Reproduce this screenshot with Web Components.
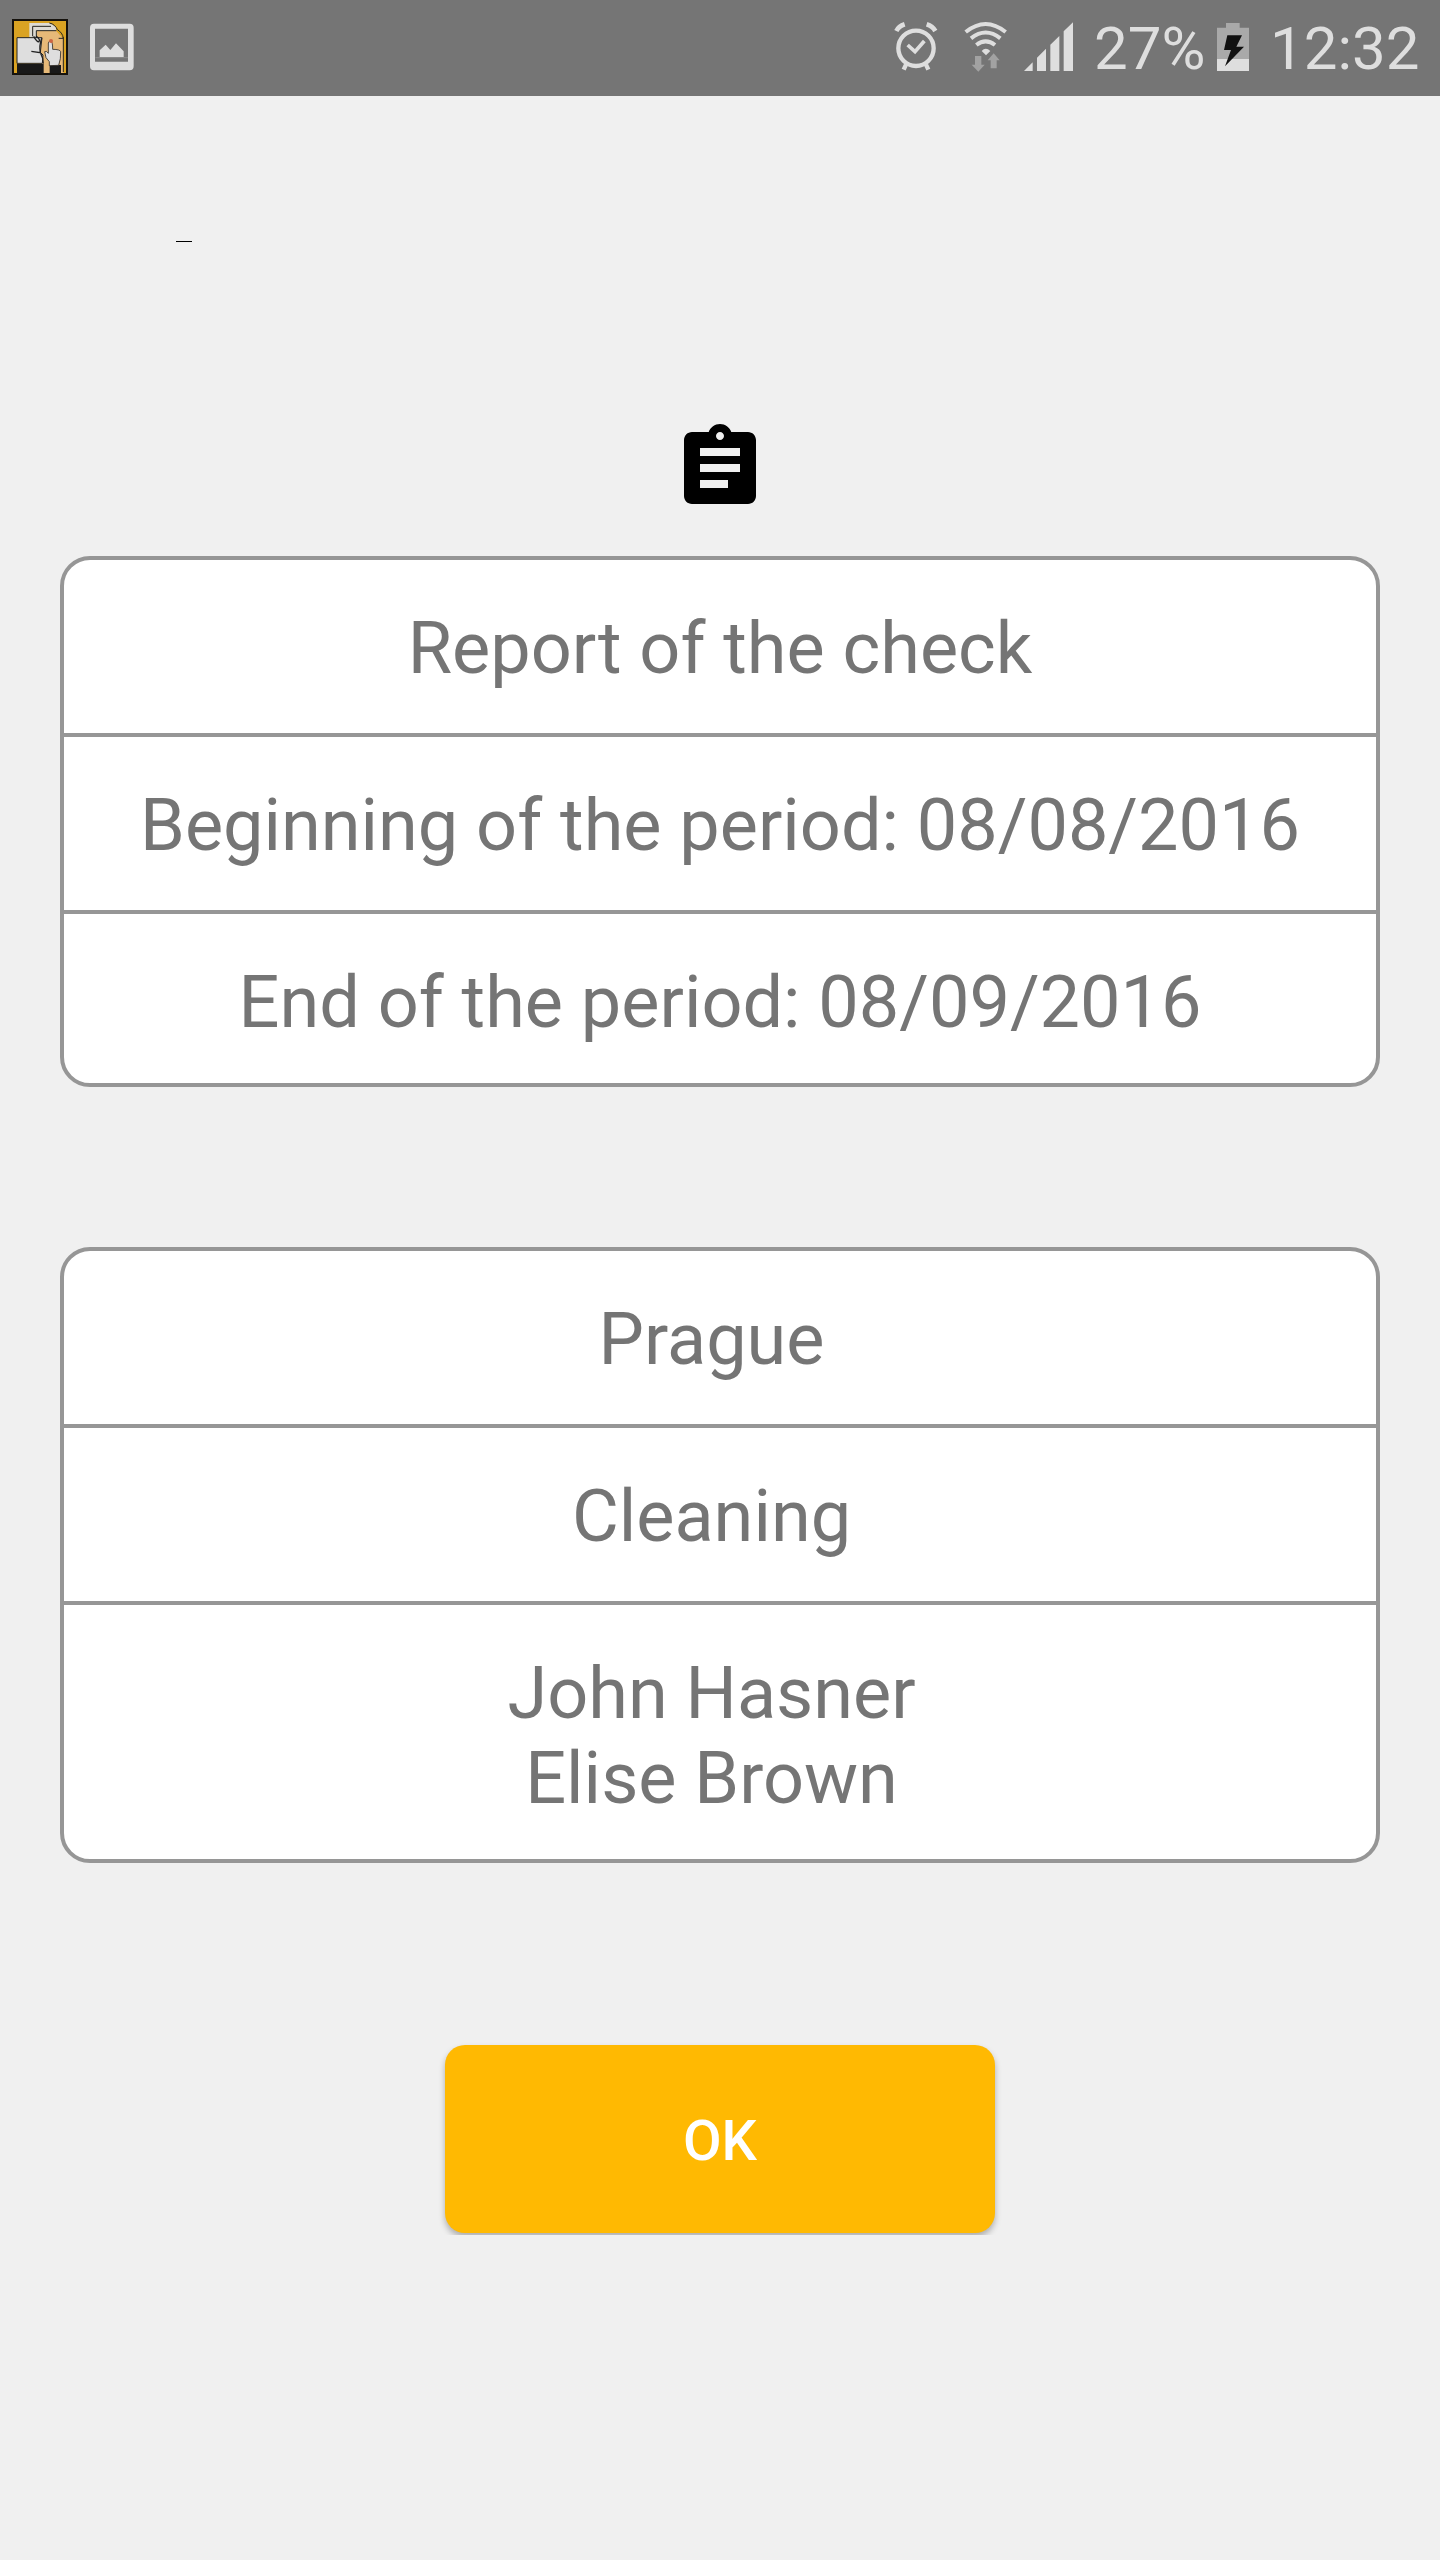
<!DOCTYPE html>
<html lang="en">
<head>
<meta charset="utf-8">
<title>Report of the check</title>
<style>
    html, body {
        margin: 0;
        padding: 0;
        background: #f0f0f0;
        font-family: Roboto, "Liberation Sans", sans-serif;
    }
</style>
</head>
<body>
<report-screen>
    <status-bar slot="status" battery="27%" time="12:32"></status-bar>
    <info-card>
        <info-row>Report of the check</info-row>
        <info-row>Beginning of the period: 08/08/2016</info-row>
        <info-row last>End of the period: 08/09/2016</info-row>
    </info-card>
    <info-card style="--shift: 17px">
        <info-row>Prague</info-row>
        <info-row>Cleaning</info-row>
        <info-row last>John Hasner<br>Elise Brown</info-row>
    </info-card>
    <ok-button slot="action">OK</ok-button>
</report-screen>

<script>
class StatusBar extends HTMLElement {
    constructor() {
        super();
        this.attachShadow({ mode: "open" });
    }

    connectedCallback() {
        this.render();
    }

    render() {
        this.shadowRoot.innerHTML = `
            <style>
                :host {
                    display: flex;
                    height: 96px;
                    box-sizing: border-box;
                    padding: 0 18px 0 12px;
                    background: #757575;
                    color: #dedede;
                    font-size: 60px;
                    line-height: 98px;
                }
                svg { display: block; height: 96px; flex: none; }
                .app { width: 56px; margin-right: 22px; }
                .picture { width: 44px; margin-right: auto; }
                .alarm { width: 44px; margin-right: 26px; }
                .wifi { width: 44px; margin-right: 16px; }
                .signal { width: 50px; margin-right: 20px; }
                .percent { width: 123px; white-space: nowrap; }
                .battery { width: 32px; }
                .time { width: 152px; margin-left: 21px; white-space: nowrap; }
            </style>
            <svg class="app" viewBox="36 0 168 288">
                <rect x="39" y="60" width="162" height="162" fill="#daa323" stroke="#15120d" stroke-width="6"/>
                <path d="M108 90h58l24 26v103h-68z" fill="#e7b978"/>
                <path d="M88 112V69h62l18 12v12h-58v22z" fill="#dedbd3"/>
                <path d="M98 109V79h55M109 119V92h60M148 69c13 2 21 12 24 20 9 5 17 14 18 26h-14M190 112v104" fill="none" stroke="#25231e" stroke-width="3"/>
                <path d="M51 113h75l-5 44 8 8-2 25H51z" fill="#dedede" stroke="#252525" stroke-width="3"/>
                <path d="M51 192h80v29H51zM149 195h34v25h-34z" fill="#191919"/>
                <path d="M101 109q10 18 16 16 5-7-9-17M125 115q-8 23-4 43l-27-4M122 160q9 16 8 31" fill="none" stroke="#222" stroke-width="4"/>
                <path d="M148 197v-12l-10-12-4-18q5-4 11 5v-31q2-8 8-5 5 1 5 24 22 0 24 7l-1 21-5 20z" fill="#dedede" stroke="#302b25" stroke-width="2.5"/>
                <circle cx="153" cy="123" r="6" fill="#ce6542"/>
            </svg>
            <svg class="picture" viewBox="271 0 132 288">
                <path fill="#dedede" fill-rule="evenodd" d="M283 71h107q12 0 12 12v116q0 12-12 12H283q-12 0-12-12V83q0-12 12-12zm3 15v99h99V86z"/>
                <path fill="#dedede" d="M300 171v-20l18-17 14 16 17-20 23 24v17z"/>
                <path d="M287 173h98" stroke="#999" stroke-width="2"/>
            </svg>
            <svg class="alarm" viewBox="71 0 132 288">
                <g fill="none" stroke="#dedede" stroke-width="13">
                    <circle cx="137" cy="145" r="53"/>
                    <path d="M112 135l22 20 28-32" stroke-width="11"/>
                    <path d="M78 93q7-14 25-20M169 73q18 6 26 20" stroke-width="14"/>
                    <path d="M107 194l-7 15M167 194l7 15" stroke-width="13"/>
                </g>
            </svg>
            <svg class="wifi" viewBox="284 0 132 288">
                <g fill="none" stroke="#dedede" stroke-width="12">
                    <path d="M289 96q60-48 120 0M305 115q44-35 88 0M321 135q28-22 56 0"/>
                </g>
                <path fill="#dedede" d="M337 153q12-13 26 0l-13 13z"/>
                <path fill="#a2a2a2" d="M317 168h19v26h10l-19 21-20-21h10zM364 205v-24h-9l18-21 18 21h-9v24z"/>
            </svg>
            <svg class="signal" viewBox="462 0 150 288">
                <path fill="#dedede" d="M462 213l26-26v26zM501 213v-40l27-27v67zM541 213v-79l27-26v105zM581 213V94l28-27v146z"/>
            </svg>
            <span class="percent">${this.getAttribute("battery")}</span>
            <svg class="battery" viewBox="411 0 96 288">
                <path fill="#a9a9a9" d="M411 83h27V69h41v14h28v94h-96z"/>
                <path fill="#dedede" d="M411 177h96v36h-96z"/>
                <path fill="#111" d="M442 106h44l-17 34h23l-57 59 18-49h-21z"/>
            </svg>
            <span class="time">${this.getAttribute("time")}</span>
        `;
    }
}

customElements.define("status-bar", StatusBar);

class ReportScreen extends HTMLElement {
    constructor() {
        super();
        this.attachShadow({ mode: "open" });
    }

    connectedCallback() {
        this.render();
    }

    render() {
        this.shadowRoot.innerHTML = `
            <style>
                :host {
                    display: flex;
                    flex-direction: column;
                    height: 2560px;
                    overflow: hidden;
                    background: #f0f0f0;
                }
                .dash {
                    width: 16px;
                    height: 1px;
                    margin: 145px 0 0 176px;
                    background: #000;
                }
                .clipboard {
                    display: block;
                    width: 96px;
                    height: 96px;
                    margin: 178px auto 40px;
                }
                .cards {
                    display: flex;
                    flex-direction: column;
                    gap: 160px;
                    padding: 0 60px;
                }
                .action {
                    display: flex;
                    justify-content: center;
                    height: 190px;
                    margin-top: 176px;
                    padding: 6px 10px 0;
                    overflow: hidden;
                }
            </style>
            <slot name="status"></slot>
            <div class="dash"></div>
            <svg class="clipboard" viewBox="0 0 24 24">
                <path d="M19 3h-4.18C14.4 1.84 13.3 1 12 1c-1.3 0-2.4.84-2.82 2H5c-1.1 0-2 .9-2 2v14c0 1.1.9 2 2 2h14c1.1 0 2-.9 2-2V5c0-1.1-.9-2-2-2zm-7 0c.55 0 1 .45 1 1s-.45 1-1 1-1-.45-1-1 .45-1 1-1zm2 14H7v-2h7v2zm3-4H7v-2h10v2zm0-4H7V7h10v2z"/>
            </svg>
            <div class="cards"><slot></slot></div>
            <div class="action"><slot name="action"></slot></div>
        `;
    }
}

customElements.define("report-screen", ReportScreen);

class InfoCard extends HTMLElement {
    constructor() {
        super();
        this.attachShadow({ mode: "open" });
    }

    connectedCallback() {
        this.shadowRoot.innerHTML = `
            <style>
                :host {
                    display: block;
                    border: 4px solid #969696;
                    border-radius: 30px;
                    background: #fff;
                    overflow: hidden;
                }
            </style>
            <slot></slot>
        `;
    }
}

customElements.define("info-card", InfoCard);

class InfoRow extends HTMLElement {
    constructor() {
        super();
        this.attachShadow({ mode: "open" });
    }

    connectedCallback() {
        this.shadowRoot.innerHTML = `
            <style>
                :host {
                    display: block;
                    padding: 46px var(--shift, 0px) 42px 0;
                    border-bottom: 4px solid #969696;
                    color: #757575;
                    font-size: 72px;
                    line-height: 85px;
                    text-align: center;
                    white-space: nowrap;
                }
                :host([last]) {
                    padding-bottom: 38px;
                    border-bottom: none;
                }
            </style>
            <slot></slot>
        `;
    }
}

customElements.define("info-row", InfoRow);

class OkButton extends HTMLElement {
    constructor() {
        super();
        this.attachShadow({ mode: "open" });
    }

    connectedCallback() {
        this.shadowRoot.innerHTML = `
            <style>
                :host { display: block; }
                button {
                    display: block;
                    width: 550px;
                    height: 188px;
                    padding: 4px 0 0;
                    border: none;
                    border-radius: 20px;
                    background: #ffb902;
                    box-shadow: 0 4px 6px rgba(0, 0, 0, 0.28);
                    color: #fff;
                    font-family: inherit;
                    font-size: 56px;
                    font-weight: 500;
                    line-height: 66px;
                }
            </style>
            <button><slot></slot></button>
        `;
    }
}

customElements.define("ok-button", OkButton);
</script>
</body>
</html>
